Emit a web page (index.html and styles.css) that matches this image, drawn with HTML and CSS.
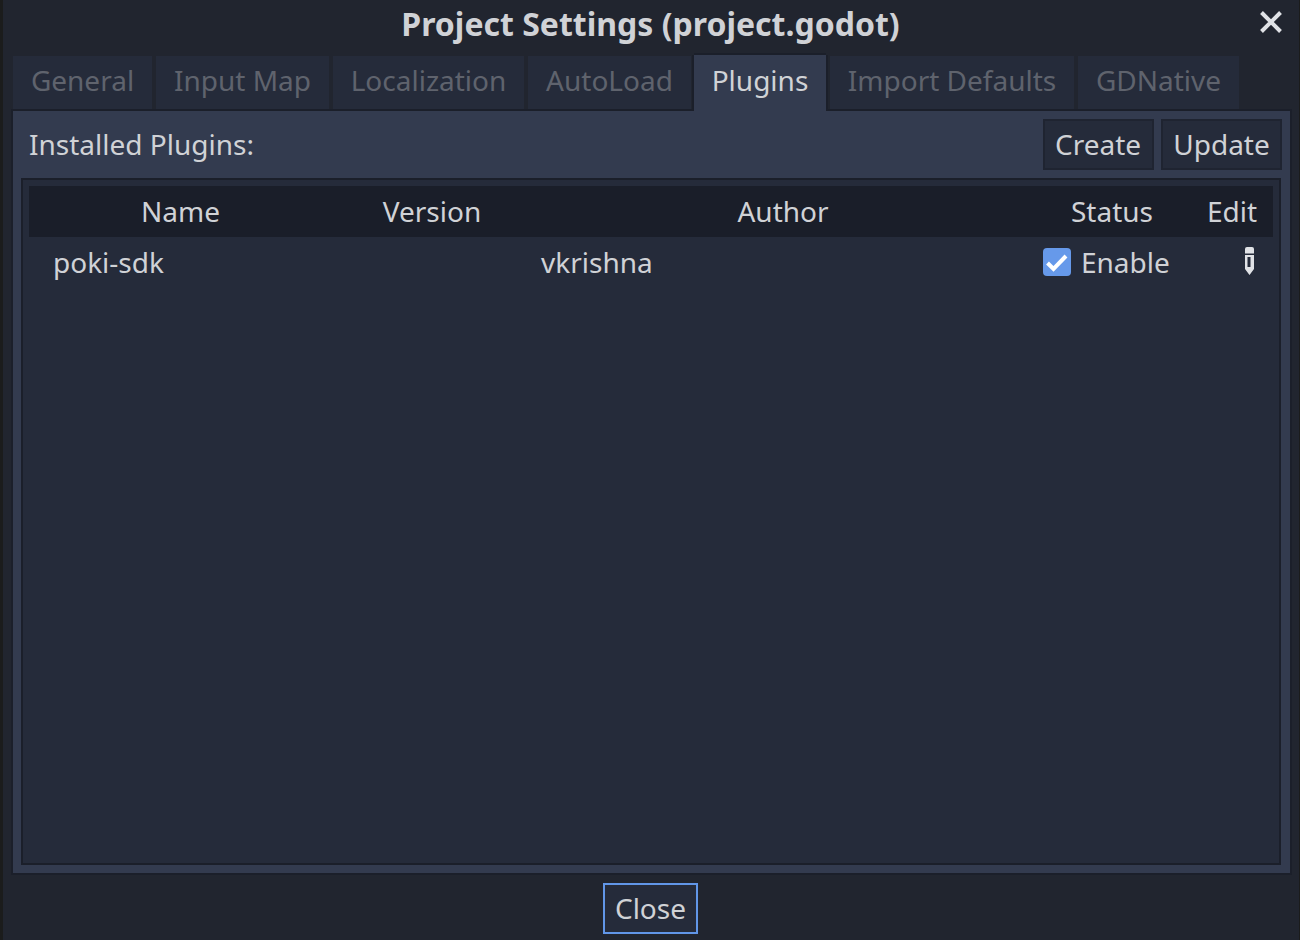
FILE: index.html
```html
<!DOCTYPE html>
<html lang="en">
<head>
<meta charset="utf-8">
<title>Project Settings (project.godot)</title>
<link rel="stylesheet" href="styles.css">
</head>
<body>
<div class="window">
  <header class="titlebar">
    <h1 class="title">Project Settings (project.godot)</h1>
    <svg class="close-x" width="24" height="24" viewBox="0 0 24 24"><path d="M2.500 2.500 21.500 21.500M21.500 2.500 2.500 21.500" stroke="#e0e2e6" stroke-width="4" fill="none"/></svg>
  </header>
  <nav class="tabs">
    <span class="tab t1">General</span>
    <span class="tab t2">Input Map</span>
    <span class="tab t3">Localization</span>
    <span class="tab t4">AutoLoad</span>
    <span class="tab t5 active">Plugins</span>
    <span class="tab t6">Import Defaults</span>
    <span class="tab t7">GDNative</span>
  </nav>
  <main class="panel">
    <div class="toolbar">
      <span class="label">Installed Plugins:</span>
      <button class="btn create">Create</button>
      <button class="btn update">Update</button>
    </div>
    <section class="tree">
      <div class="row head">
        <span>Name</span><span>Version</span><span>Author</span><span>Status</span><span class="h-edit">Edit</span>
      </div>
      <div class="row item">
        <span class="c-name">poki-sdk</span>
        <span></span>
        <span class="c-author">vkrishna</span>
        <span class="c-status">
          <svg class="check" width="28" height="28" viewBox="0 0 28 28"><rect width="28" height="28" rx="4" fill="#6699ea"/><path d="M4.500 15 10.500 21 23 8" stroke="#fff" stroke-width="4" fill="none"/></svg>
          Enable
        </span>
        <span class="c-edit">
          <svg width="9" height="28" viewBox="0 0 9 28"><path d="M2 0H7Q9 0 9 2V6.500H0V2Q0 0 2 0ZM0 8H9V22L4.500 28 0 22ZM2.500 10V20H5.500V10Z" fill="#e0e2e6" fill-rule="evenodd"/></svg>
        </span>
      </div>
    </section>
  </main>
  <footer class="footer"><button class="btn close">Close</button></footer>
</div>
</body>
</html>
```
FILE: styles.css
```css
* { box-sizing: border-box; }
html, body { margin: 0; height: 100%; }
body {
  background: #1b1c1c;
  font-family: "Noto Sans", sans-serif;
  font-size: 28px;
  color: #d0d2d6;
  overflow: hidden;
}
.window {
  margin-left: 3px;
  margin-right: 1px;
  height: 940px;
  background: #21252f;
  display: flex;
  flex-direction: column;
  padding: 0 7px 0 8px;
}
.titlebar {
  height: 56px;
  flex: none;
  position: relative;
  display: flex;
  justify-content: center;
}
.title {
  margin: 0;
  font-size: 32px;
  line-height: 47px;
  font-weight: 700;
  color: #d0d2d6;
  padding-right: 2px;
}
.close-x { position: absolute; right: 9px; top: 10px; }
.tabs {
  display: flex;
  height: 53px;
  flex: none;
  padding-left: 2px;
  gap: 4px;
}
.tab {
  background: #252b3a;
  color: #5f636d;
  line-height: 49px;
  text-align: center;
  height: 53px;
}
.t1 { width: 139px; }
.t2 { width: 173px; }
.t3 { width: 191px; }
.t4 { width: 163px; }
.t5 { width: 132px; margin-left: -1px; }
.t6 { width: 244px; }
.t7 { width: 161px; }
.tab.active {
  background: #333b4f;
  color: #d0d2d6;
  height: 56px;
  box-shadow: 0 -2px 0 #1b1f2a, -2px 0 0 #1b1f2a, 2px 0 0 #1b1f2a;
  position: relative;
  z-index: 1;
  margin-top: -1px;
  margin-bottom: -2px;
  padding-top: 1px;
}
.panel {
  height: 766px;
  flex: none;
  background: #333b4f;
  border: 2px solid #1b1f2a;
  padding: 8px 9px 8px 8px;
  display: flex;
  flex-direction: column;
}
.toolbar {
  display: flex;
  align-items: center;
  height: 51px;
  flex: none;
  gap: 7px;
  margin-right: -1px;
}
.label { flex: 1; padding-left: 8px; padding-bottom: 2px; color: #d0d2d6; }
.btn {
  font: inherit;
  color: #d0d2d6;
  background: #252b3a;
  border: 2px solid #1f2431;
  padding: 0 0 2px;
  height: 51px;
  line-height: 44px;
}
.create { width: 111px; padding-right: 1px; }
.update { width: 121px; }
.tree {
  margin-top: 8px;
  flex: 1;
  min-height: 0;
  background: #252b3a;
  border: 2px solid #1b1f2a;
  padding: 6px;
}
.row {
  display: grid;
  grid-template-columns: 303px 200px 502px 156px 83px;
  align-items: center;
  height: 51px;
  padding-bottom: 2px;
}
.head { background: #1a1e29; text-align: center; }
.h-edit { padding-left: 1px; }
.c-name { padding-left: 24px; }
.c-author { padding-left: 9px; }
.c-status { padding-left: 9px; display: flex; align-items: center; gap: 10px; }
.c-edit { display: flex; justify-content: flex-end; padding-right: 19px; height: 28px; margin-top: -1px; }
.footer {
  flex: 1;
  display: flex;
  justify-content: center;
  padding-top: 8px;
}
.close {
  width: 95px;
  height: 51px;
  border: 2px solid #6196e8;
  margin-right: 2px;
  line-height: 47px;
}
```
